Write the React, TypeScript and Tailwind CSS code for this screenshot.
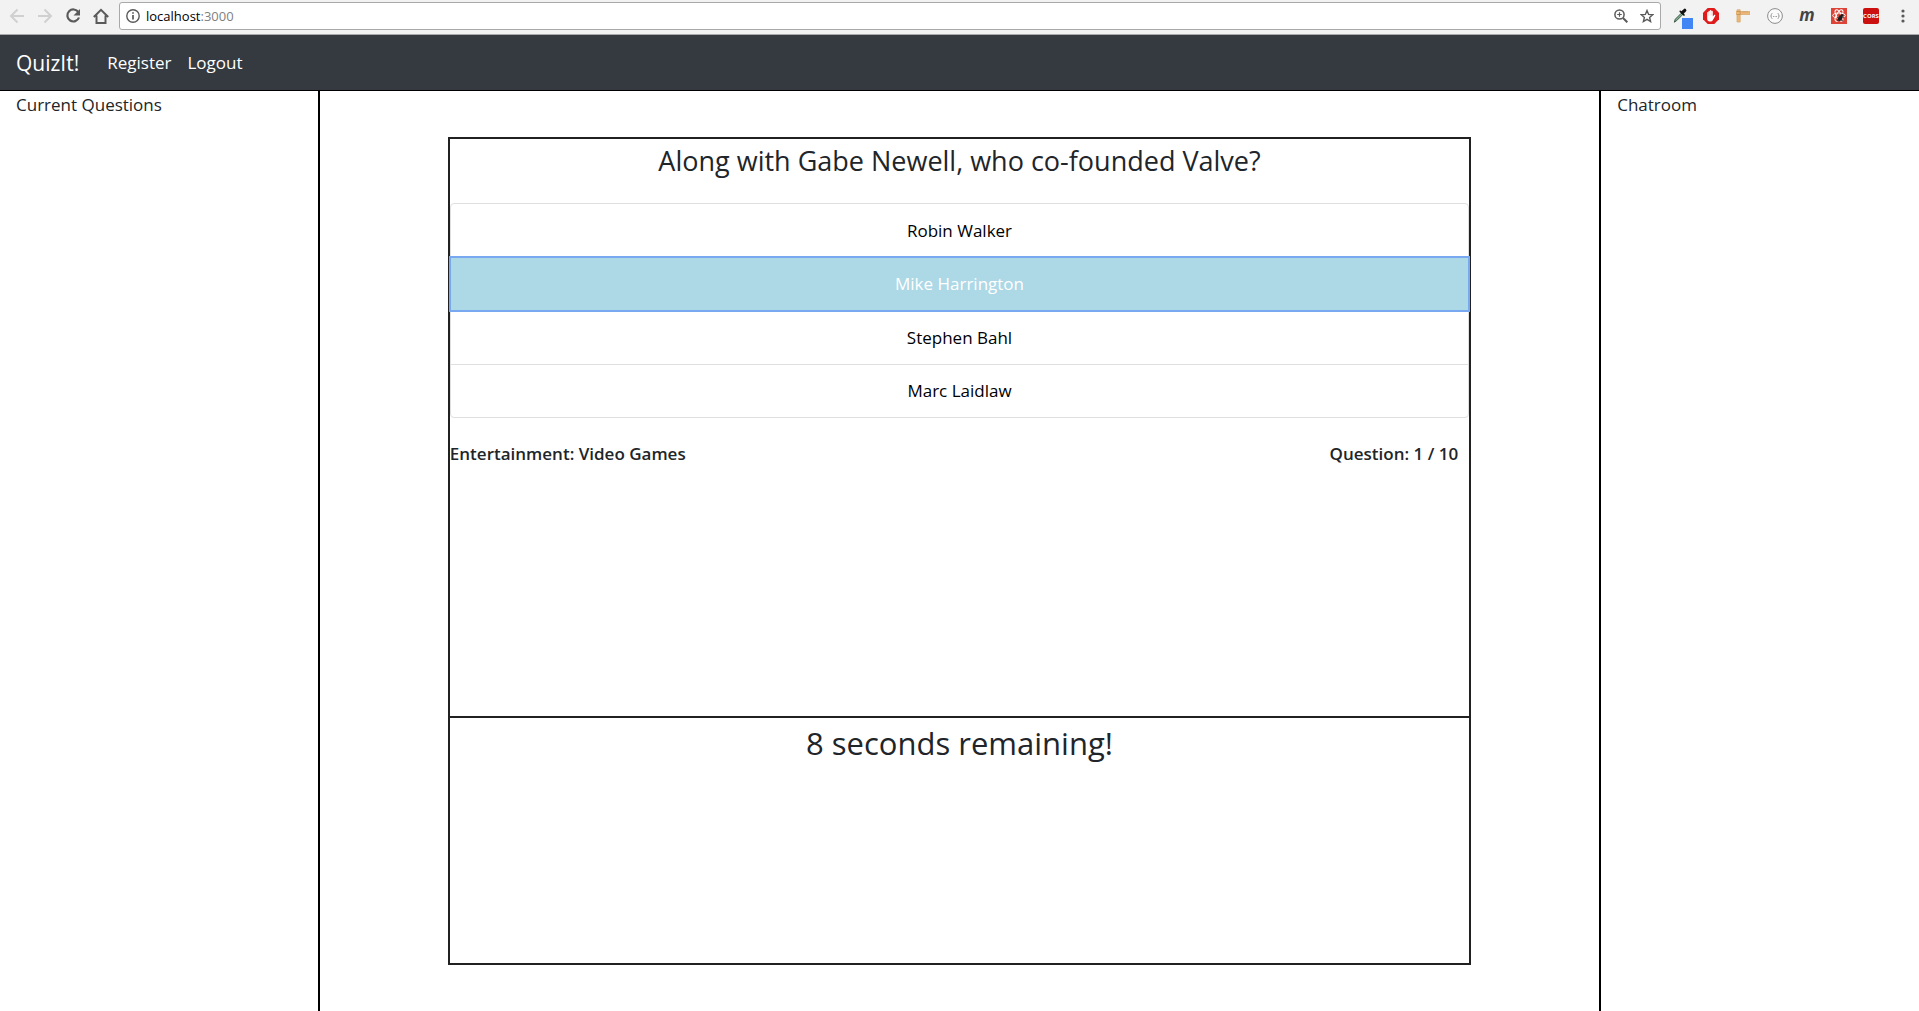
import { useState } from "react";

const answers = ["Robin Walker", "Mike Harrington", "Stephen Bahl", "Marc Laidlaw"];

function BackIcon() {
  return (
    <svg width="16" height="16" viewBox="0 0 16 16" fill="none" stroke="#d0d0d0" strokeWidth="2">
      <path d="M15 8H2.5M8.5 1.5L2 8l6.5 6.5" />
    </svg>
  );
}

function ForwardIcon() {
  return (
    <svg width="16" height="16" viewBox="0 0 16 16" fill="none" stroke="#d0d0d0" strokeWidth="2">
      <path d="M1 8h12.500M7.500 1.500L14 8l-6.500 6.500" />
    </svg>
  );
}

function ReloadIcon() {
  return (
    <svg width="16" height="16" viewBox="0 0 16 16" fill="none">
      <path d="M13.400 4.200A6 6 0 1 0 14 9.500" stroke="#5a5a5a" strokeWidth="2.200" />
      <path d="M15 1v6.500H8.500z" fill="#5a5a5a" />
    </svg>
  );
}

function HomeIcon() {
  return (
    <svg width="16" height="16" viewBox="0 0 16 16" fill="none" stroke="#5a5a5a" strokeWidth="2">
      <path d="M0.800 9L8 1.800 15.200 9M3.500 7.500V15h9V7.500" />
    </svg>
  );
}

function InfoIcon() {
  return (
    <svg width="14" height="14" viewBox="0 0 14 14" fill="none">
      <circle cx="7" cy="7" r="6.200" stroke="#5a5a5a" strokeWidth="1.400" />
      <path d="M7 6v4.500M7 3.200v1.600" stroke="#5a5a5a" strokeWidth="1.700" />
    </svg>
  );
}

function ZoomIcon() {
  return (
    <svg width="14" height="14" viewBox="0 0 14 14" fill="none" stroke="#5a5a5a">
      <circle cx="5.500" cy="5.500" r="4.600" strokeWidth="1.500" />
      <path d="M9 9l4.300 4.300" strokeWidth="2" />
      <path d="M5.500 3.200v4.600M3.200 5.500h4.600" strokeWidth="1.200" />
    </svg>
  );
}

function StarIcon() {
  return (
    <svg width="14" height="14" viewBox="0 0 14 14" fill="none" stroke="#5a5a5a" strokeWidth="1.400">
      <path d="M7 1.500l1.600 3.900 4.200.3-3.200 2.700 1 4.100L7 10.300l-3.600 2.200 1-4.100L1.200 5.700l4.200-.3z" />
    </svg>
  );
}

function EyedropperIcon() {
  return (
    <svg width="20" height="22" viewBox="0 0 20 22" fill="none">
      <path d="M1.300 15.200l1-3 6-6 1.400 1.400-6 6z" fill="#7fae8c" stroke="#3c5a48" strokeWidth="1" />
      <path d="M7.300 4.300l3.700 3.700" stroke="#111" strokeWidth="1.700" strokeLinecap="round" />
      <path d="M9.500 5.500l2.300-2.200" stroke="#111" strokeWidth="3.200" strokeLinecap="round" />
      <rect x="9" y="11" width="11" height="11" fill="#4285f4" />
    </svg>
  );
}

function HandIcon() {
  return (
    <svg width="16" height="16" viewBox="0 0 16 16">
      <path d="M4.700 0h6.600L16 4.700v6.600L11.300 16H4.700L0 11.300V4.700z" fill="#e01b1b" />
      <path d="M4.200 8.500V4.700c0-.9 1.300-.9 1.300 0V3.400c0-.9 1.400-.9 1.400 0v-.7c0-.9 1.500-.9 1.500 0v.8c0-.9 1.400-.9 1.400 0v5l1.300-1.400c.7-.6 1.500 0 1.100.8l-2.600 4.700c-.4.600-1 .9-1.700.9H6.700c-1.400 0-2.500-1-2.500-2.500z" fill="#fff" />
      <path d="M5.500 4.700v3M6.900 3.500v4M8.400 3.500v4" stroke="#f3b0b0" strokeWidth=".4" />
    </svg>
  );
}

function RulerIcon() {
  return (
    <svg width="14" height="14" viewBox="0 0 14 14">
      <path d="M1 .8h3.200v1.700H14v3H4.200V13H1V5.500H0v-3h1z" fill="#ecb878" stroke="#d9a566" strokeWidth=".7" />
      <path d="M1 2.500h3.200v3H1M7 2.500v1M9 2.500v1M11 2.500v1" stroke="#b98046" strokeWidth=".6" fill="none" />
    </svg>
  );
}

function BracesIcon() {
  return (
    <svg width="16" height="16" viewBox="0 0 16 16" fill="none" stroke="#8c8c8c">
      <circle cx="8" cy="8" r="7.400" fill="#fafafa" strokeWidth="1" />
      <path d="M5.300 5.500c-1 0-.9.600-.9 1.300S4.200 8 3.600 8c.6 0 .8.500.8 1.200s-.1 1.300.9 1.300M10.700 5.500c1 0 .9.600.9 1.300s.2 1.200.8 1.200c-.6 0-.8.500-.8 1.200s.1 1.300-.9 1.300" strokeWidth=".9" />
      <path d="M6.200 8.500h.8M7.700 8.500h.8M9.200 8.500h.8" strokeWidth="1" />
    </svg>
  );
}

function AtomBugIcon() {
  return (
    <svg width="16" height="16" viewBox="0 0 16 16" fill="none">
      <rect width="16" height="16" fill="#dc4437" />
      <g stroke="#fff" strokeWidth="1">
        <ellipse cx="8" cy="7.500" rx="6.300" ry="2.500" />
        <ellipse cx="8" cy="7.500" rx="6.300" ry="2.500" transform="rotate(60 8 7.500)" />
        <ellipse cx="8" cy="7.500" rx="6.300" ry="2.500" transform="rotate(120 8 7.500)" />
      </g>
      <ellipse cx="9" cy="10.300" rx="2" ry="3" fill="#1c1c1c" transform="rotate(35 9 10.300)" />
      <circle cx="11" cy="7.400" r="1.300" fill="#1c1c1c" />
      <path d="M6 9.300l6 3.700M8.500 7.500l4.500 2.500M6 13l1-1" stroke="#1c1c1c" strokeWidth=".8" />
    </svg>
  );
}

function MenuDotsIcon() {
  return (
    <svg width="4" height="14" viewBox="0 0 4 14" fill="#5a5a5a">
      <circle cx="2" cy="2" r="1.600" />
      <circle cx="2" cy="7" r="1.600" />
      <circle cx="2" cy="12" r="1.600" />
    </svg>
  );
}

function BrowserBar() {
  return (
    <header className="flex h-[35px] items-center border-b border-[#a9a9a9] bg-[#f2f2f2] pr-[14px] pb-0.5 pl-2">
      <div className="flex w-[111px] shrink-0 items-center gap-3 pl-px">
        <button aria-label="Back"><BackIcon /></button>
        <button aria-label="Forward"><ForwardIcon /></button>
        <button aria-label="Reload"><ReloadIcon /></button>
        <button aria-label="Home"><HomeIcon /></button>
      </div>
      <div className="flex h-7 min-w-0 flex-1 items-center rounded-[3px] border border-[#a9a9a9] bg-white px-[6px]">
        <InfoIcon />
        <div className="ml-[6px] flex-1 text-[13px] text-black">
          localhost<span className="text-[#808080]">:3000</span>
        </div>
        <div className="flex items-center gap-3">
          <button aria-label="Zoom"><ZoomIcon /></button>
          <button aria-label="Bookmark"><StarIcon /></button>
        </div>
      </div>
      <div className="ml-3 flex shrink-0 items-center gap-4">
        <button aria-label="Color picker" className="mt-1 h-[22px]"><EyedropperIcon /></button>
        <button aria-label="Ad blocker" className="-ml-1.5"><HandIcon /></button>
        <button aria-label="Ruler" className="flex w-4 justify-center"><RulerIcon /></button>
        <button aria-label="JSON viewer"><BracesIcon /></button>
        <button aria-label="Momentum" className="w-4 pb-0.5 text-[17px] leading-4 font-bold text-[#444] italic">
          m
        </button>
        <button aria-label="React tools"><AtomBugIcon /></button>
        <button
          aria-label="CORS toggle"
          className="flex size-4 items-center justify-center rounded-[2px] bg-[#cc0f0f] text-[6px] leading-4 font-bold text-white"
        >
          CORS
        </button>
        <button aria-label="Menu" className="ml-1.5"><MenuDotsIcon /></button>
      </div>
    </header>
  );
}

export default function App() {
  const [selected, setSelected] = useState(1);

  return (
    <div className="flex min-h-screen flex-col bg-white font-['Open_Sans','Noto_Sans',sans-serif] text-[17px] leading-[26px] text-[#212529]">
      <BrowserBar />
      <nav className="flex h-14 items-center border-b border-black bg-[#343a40] px-4 text-white">
        <a href="#home" className="mr-7 text-[21px]">QuizIt!</a>
        <a href="#register" className="mr-4">Register</a>
        <a href="#logout">Logout</a>
      </nav>
      <div className="flex flex-1">
        <aside className="w-1/6 border-r-2 border-black px-4 py-px">Current Questions</aside>
        <main className="flex flex-1 flex-col px-32 py-[46px]">
          <div className="grid flex-1 grid-rows-[7fr_3fr] border-2 border-[#212121]">
            <section>
              <h1 className="mt-1 text-center text-[27px] leading-9">
                Along with Gabe Newell, who co-founded Valve?
              </h1>
              <ul className="mt-6 flex h-[215px] flex-col rounded-[4px] border border-[#dfdfdf]">
                {answers.map((answer, i) => (
                  <li key={answer} className="flex flex-1 border-b border-[#dfdfdf] last:border-b-0">
                    <button
                      onClick={() => setSelected(i)}
                      className={
                        i === selected
                          ? "w-full bg-[#add8e6] pt-px text-white outline-2 outline-[#78a9f0]"
                          : "w-full pt-px text-black"
                      }
                    >
                      {answer}
                    </button>
                  </li>
                ))}
              </ul>
              <div className="mt-[23px] flex justify-between pr-[11px] font-semibold">
                <span>Entertainment: Video Games</span>
                <span>Question: 1 / 10</span>
              </div>
            </section>
            <section className="border-t-2 border-[#212121] pt-1">
              <h2 className="text-center text-[31px] leading-[42px]">8 seconds remaining!</h2>
            </section>
          </div>
        </main>
        <aside className="w-1/6 border-l-2 border-black px-4 py-px">Chatroom</aside>
      </div>
    </div>
  );
}
